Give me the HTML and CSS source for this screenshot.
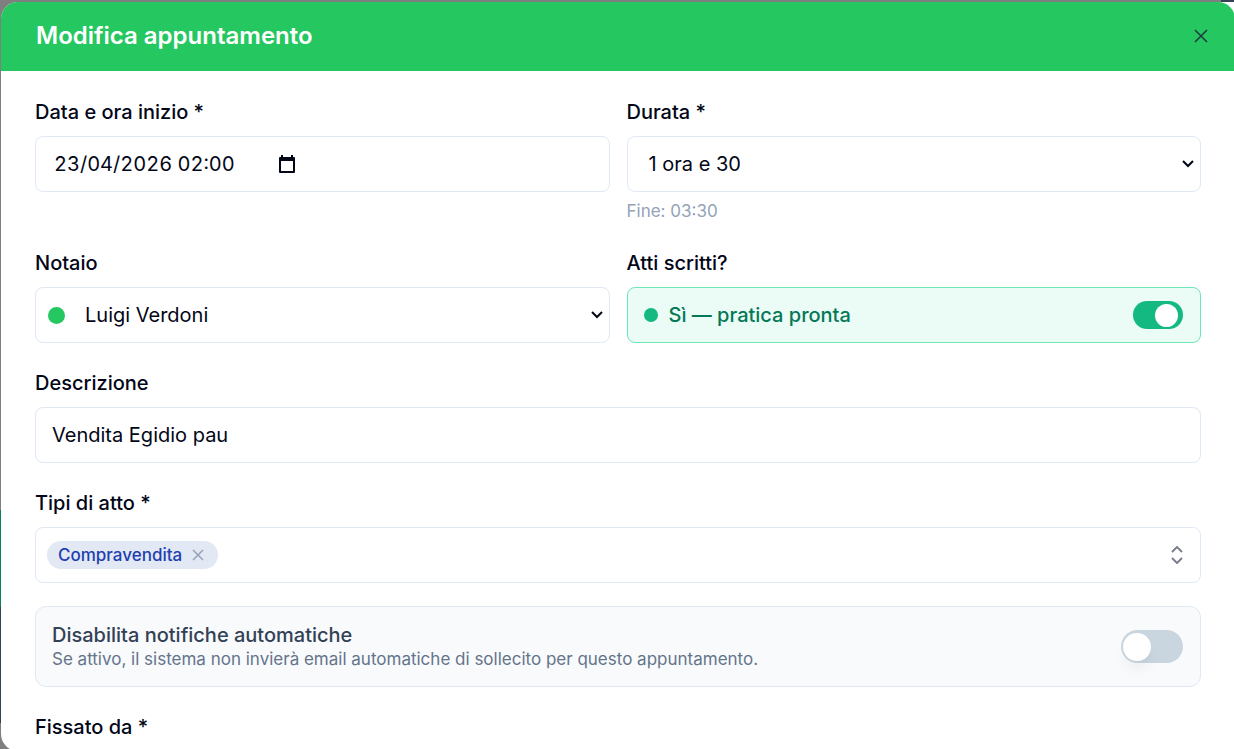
FILE: index.html
```html
<!DOCTYPE html>
<html lang="it">
<head>
    <meta charset="UTF-8">
    <meta name="viewport" content="width=device-width, initial-scale=1.0">
    <title>Modifica appuntamento</title>
    <link rel="stylesheet" href="styles.css">
</head>
<body>
<div class="modal" role="dialog" aria-labelledby="modal-title">
    <div class="modal-header">
        <h2 id="modal-title">Modifica appuntamento</h2>
        <button type="button" class="icon-btn close-btn" aria-label="Chiudi">
            <svg width="16" height="16" viewBox="0 0 16 16"><path d="M2 2l12 12M14 2L2 14"/></svg>
        </button>
    </div>
    <form class="modal-body">
        <div class="row">
            <div class="field">
                <label for="inizio">Data e ora inizio *</label>
                <div class="control date-control">
                    <input type="text" id="inizio" value="23/04/2026 02:00">
                    <button type="button" class="icon-btn" aria-label="Apri calendario">
                        <svg width="18" height="20" viewBox="0 0 18 20"><path class="solid" d="M3 1h2v2h8V1h2v2h1a1 1 0 0 1 1 1v14a1 1 0 0 1-1 1H2a1 1 0 0 1-1-1V4a1 1 0 0 1 1-1h1zM3 7v10h12V7z"/></svg>
                    </button>
                </div>
            </div>
            <div class="field">
                <label for="durata">Durata *</label>
                <div class="control select-control">
                    <select id="durata">
                        <option>1 ora e 30</option>
                    </select>
                    <svg class="chevron" width="14" height="8" viewBox="0 0 14 8"><path d="M2 1l5 5 5-5"/></svg>
                </div>
                <p class="hint">Fine: 03:30</p>
            </div>
        </div>

        <div class="row">
            <div class="field">
                <label for="notaio">Notaio</label>
                <div class="control select-control with-dot">
                    <span class="dot dot-notaio"></span>
                    <select id="notaio">
                        <option>Luigi Verdoni</option>
                    </select>
                    <svg class="chevron" width="14" height="8" viewBox="0 0 14 8"><path d="M2 1l5 5 5-5"/></svg>
                </div>
            </div>
            <div class="field">
                <label for="atti">Atti scritti?</label>
                <div class="control status-control">
                    <span class="dot"></span>
                    <span class="status-text">Sì — pratica pronta</span>
                    <input type="checkbox" id="atti" class="switch switch-small" checked>
                </div>
            </div>
        </div>

        <div class="field">
            <label for="descrizione">Descrizione</label>
            <input type="text" id="descrizione" class="control text-control" value="Vendita Egidio pau">
        </div>

        <div class="field">
            <label for="tipi">Tipi di atto *</label>
            <div class="control tags-control">
                <span class="tag">Compravendita
                    <button type="button" class="icon-btn" aria-label="Rimuovi Compravendita">
                        <svg width="12" height="12" viewBox="0 0 12 12"><path d="M1 1l10 10M11 1L1 11"/></svg>
                    </button>
                </span>
                <button type="button" id="tipi" class="icon-btn expand-btn" aria-label="Tipi di atto">
                    <svg width="14" height="18" viewBox="0 0 14 18"><path d="M2 6l5-5 5 5M2 12l5 5 5-5"/></svg>
                </button>
            </div>
        </div>

        <div class="notice">
            <label for="notifiche">
                <span class="notice-title">Disabilita notifiche automatiche</span>
                <span class="notice-text">Se attivo, il sistema non invierà email automatiche di sollecito per questo appuntamento.</span>
            </label>
            <input type="checkbox" id="notifiche" class="switch">
        </div>

        <div class="field">
            <label for="fissato">Fissato da *</label>
            <input type="text" id="fissato" class="control text-control">
        </div>
    </form>
</div>
</body>
</html>
```
FILE: styles.css
```css
* {
    box-sizing: border-box;
}
body {
    margin: 0;
    height: 100vh;
    overflow: hidden;
    padding: 2px 0 0 1px;
    font-family: Inter, sans-serif;
    font-size: 20px;
    line-height: 24px;
    color: #020617;
    background:
        linear-gradient(#334155 2px, #ffffff 2px) right top / 13px 100% no-repeat,
        linear-gradient(#7f7f7f 510px, #0b8058 510px, #0b8058 607px, #334155 607px, #334155 723px, #7f7f7f 723px);
}
.modal {
    width: 100vw;
    height: 100vh;
    overflow: hidden;
    background-color: #ffffff;
    border-radius: 17px;
}
.modal-header {
    display: flex;
    align-items: center;
    justify-content: space-between;
    height: 69px;
    padding: 0 18px 2px 35px;
    background-color: #24c760;
}
.modal-header h2 {
    margin: 0;
    font-size: 24px;
    font-weight: 600;
    color: #ffffff;
}
.modal-body {
    display: flex;
    flex-direction: column;
    gap: 28px;
    padding: 29px 34px;
}
.row {
    display: grid;
    grid-template-columns: 1fr 1fr;
    gap: 17px;
}
.field {
    display: flex;
    flex-direction: column;
}
.field label {
    margin-bottom: 12px;
    font-weight: 500;
}
.control {
    display: flex;
    align-items: center;
    height: 56px;
    border: 1px solid #dfe8f4;
    border-radius: 8px;
    background-color: #ffffff;
}
input, select {
    font: inherit;
    color: inherit;
}
.text-control {
    width: 100%;
    padding: 0 16px;
}
.date-control {
    padding: 0 18px;
}
.date-control input {
    width: 224px;
    padding: 0;
    border: none;
    font-variant-numeric: tabular-nums;
}
.select-control {
    position: relative;
}
.select-control select {
    flex: 1;
    height: 100%;
    padding: 0 40px 0 21px;
    border: none;
    border-radius: 8px;
    background: none;
    appearance: none;
}
.with-dot {
    padding-left: 12px;
}
.with-dot select {
    padding-left: 20px;
}
.chevron {
    position: absolute;
    right: 5px;
    pointer-events: none;
}
svg {
    display: block;
    fill: none;
    stroke: currentColor;
    stroke-width: 2;
}
svg .solid {
    fill: currentColor;
    fill-rule: evenodd;
    stroke: none;
}
.icon-btn {
    padding: 0;
    border: none;
    background: none;
    color: inherit;
    cursor: pointer;
}
.close-btn {
    padding: 0 8px;
    color: #1e3a40;
}
.close-btn svg {
    stroke-width: 1.5;
}
.hint {
    margin: 7px 0 0;
    font-size: 17px;
    color: #94a3b8;
}
.dot {
    width: 14px;
    height: 14px;
    border-radius: 50%;
    background-color: #14b981;
}
.dot-notaio {
    width: 17px;
    height: 17px;
    background-color: #24c760;
}
.status-control {
    gap: 11px;
    padding: 0 17px 0 16px;
    border-color: #6ee7b7;
    background-color: #eafcf5;
}
.status-text {
    flex: 1;
    font-weight: 500;
    color: #047857;
}
.switch {
    display: flex;
    align-items: center;
    flex-shrink: 0;
    width: 62px;
    height: 33px;
    margin: 0;
    padding: 0 2px;
    border-radius: 17px;
    background-color: #c9d5df;
    appearance: none;
    cursor: pointer;
}
.switch::before {
    content: "";
    width: 28px;
    height: 28px;
    border-radius: 50%;
    background-color: #ffffff;
    box-shadow: 0 10px 12px rgba(2, 6, 23, 0.04);
}
.switch:checked {
    justify-content: flex-end;
    background-color: #14b981;
}
.switch-small {
    width: 50px;
    height: 28px;
    padding: 0 5px;
}
.switch-small::before {
    width: 23px;
    height: 23px;
    box-shadow: none;
}
.tags-control {
    justify-content: space-between;
    padding: 0 16px 0 11px;
}
.tag {
    display: flex;
    align-items: center;
    gap: 10px;
    height: 28px;
    padding: 0 14px 0 11px;
    border-radius: 14px;
    font-size: 17px;
    font-weight: 500;
    color: #1e40af;
    background-color: #e2e8f4;
}
.tag svg {
    color: #94a3b8;
    stroke-width: 1.5;
}
.expand-btn {
    color: #7b808b;
}
.notice {
    display: flex;
    align-items: center;
    justify-content: space-between;
    height: 81px;
    margin-top: -5px;
    padding: 0 17px 0 16px;
    border: 1px solid #dfe8f4;
    border-radius: 11px;
    background-color: #f8fafc;
}
.notice-title, .notice-text {
    display: block;
}
.notice-title {
    font-weight: 500;
    color: #334155;
}
.notice-text {
    font-size: 17px;
    color: #64748b;
}
```
